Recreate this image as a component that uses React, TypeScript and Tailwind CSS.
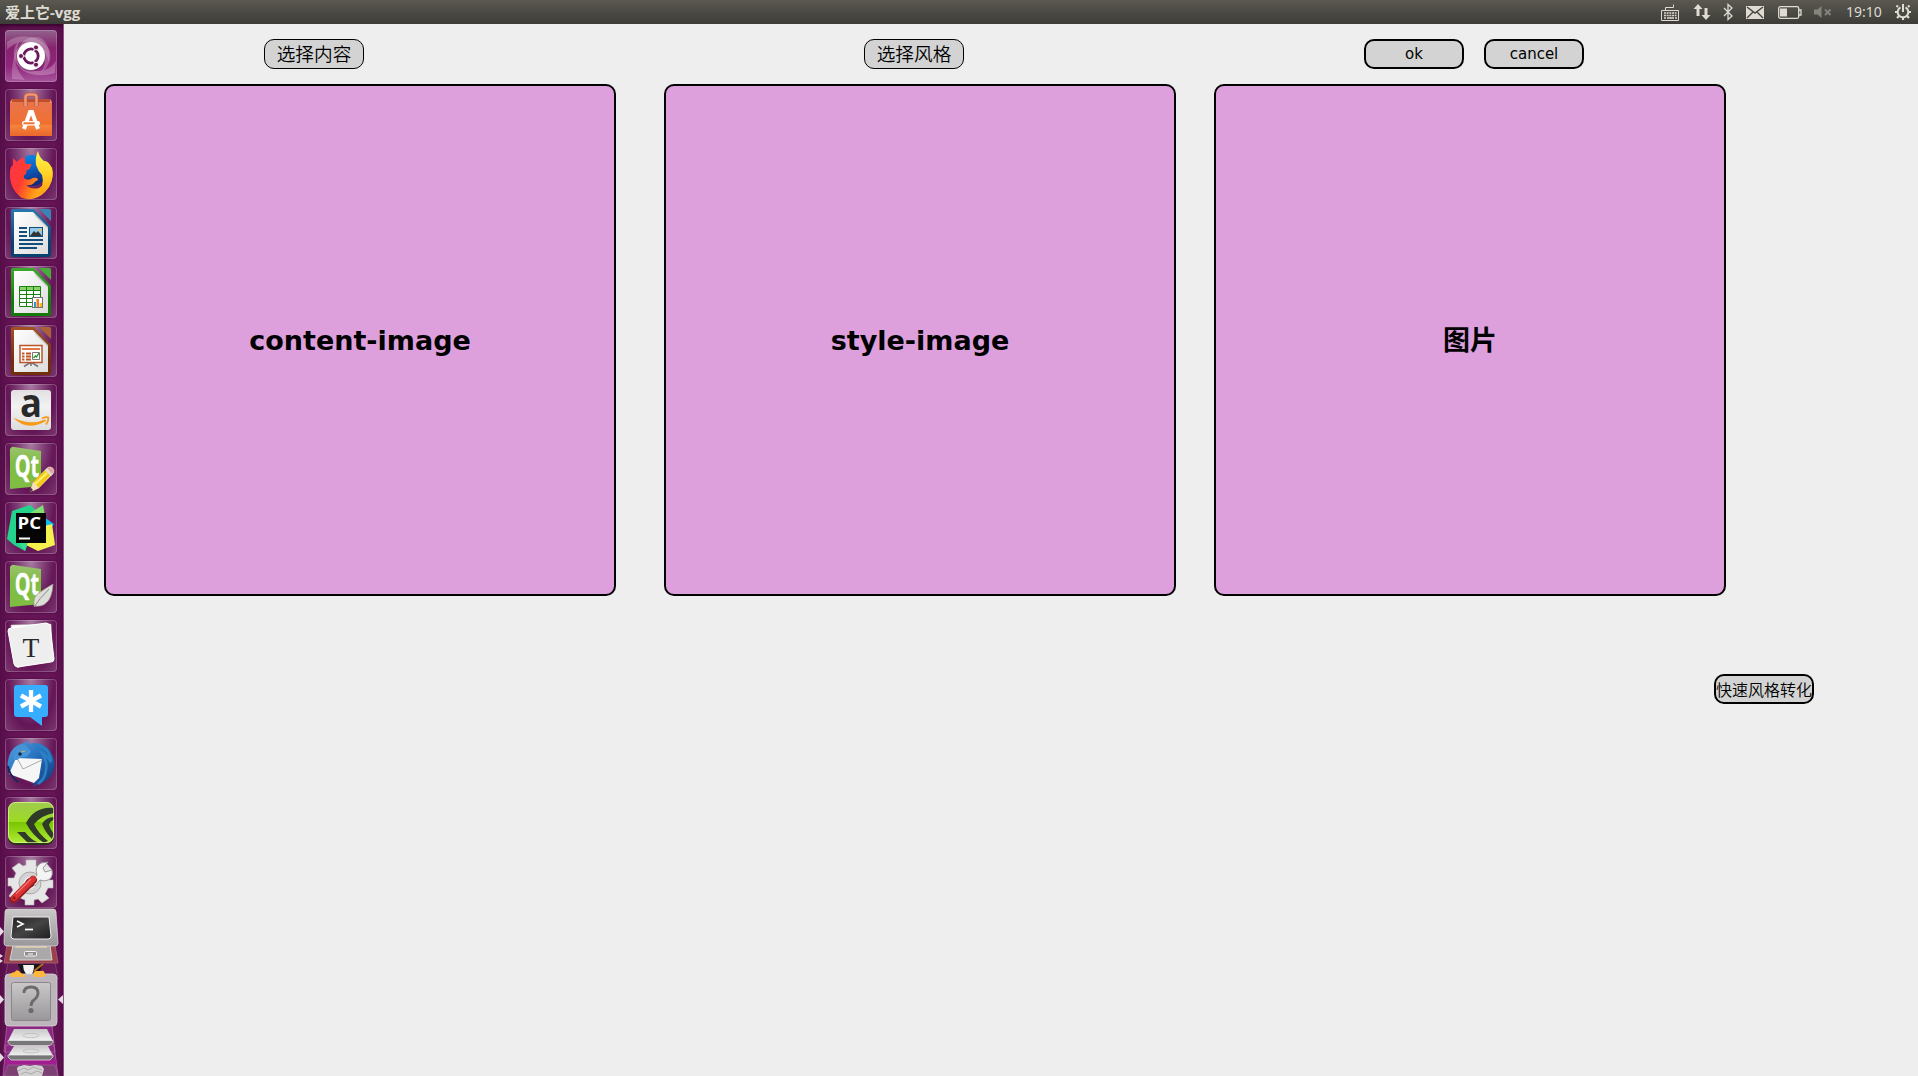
import type { ReactNode } from "react";

const cjk = "font-['DejaVu_Sans','Noto_Sans_CJK_SC',sans-serif]";

function Tile({ children, bright = false }: { children: ReactNode; bright?: boolean }) {
  return (
    <div
      className={
        "h-[52px] w-[52px] shrink-0 rounded-[4px] shadow-[inset_0_0_0_1px_rgba(255,255,255,0.2),0_0_2px_rgba(50,0,40,0.7)] " +
        (bright
          ? "bg-[linear-gradient(#91638c,#88226f_35%,#90257c_70%,#a6559b)]"
          : "bg-[radial-gradient(ellipse_at_50%_0%,#a87ba2_0%,#7d3b73_38%,#641556_64%,#7c3a71_100%)]")
      }
    >
      <svg viewBox="0 0 52 52" className="block h-[52px] w-[52px] overflow-visible">
        {children}
      </svg>
    </div>
  );
}

function Ubuntu() {
  return (
    <Tile bright>
      <g fill="#fff">
        <path d="M7 49C6 25 14 8 30 7 41 6 46 20 44 32 40 18 30 10 22 13 8 18 6 34 20 50z" opacity=".22" />
        <path d="M2 12C14 3 35 5 44 19 48 27 43 39 36 42 45 31 36 14 22 12 14 11 8 14 2 20z" opacity=".22" />
        <path d="M50 43C34 48 15 45 10 30 7 22 10 15 14 11 8 28 21 42 35 41 42 40 47 37 51 31z" opacity=".25" />
      </g>
      <circle cx="26" cy="27" r="14.4" fill="#4b0b40" opacity=".35" />
      <circle cx="26" cy="26" r="14" fill="#fff" />
      <circle cx="26" cy="26" r="7.2" fill="none" stroke="#6b1659" strokeWidth="2.800" />
      <g stroke="#fff" strokeWidth="1.200">
        <path d="M22 26H13M28 22l4-7M28 30l4 7" />
      </g>
      <g fill="#6b1659" stroke="#fff" strokeWidth=".9">
        <circle cx="16" cy="26" r="2.500" />
        <circle cx="31" cy="17.400" r="2.500" />
        <circle cx="31" cy="34.700" r="2.500" />
      </g>
    </Tile>
  );
}

function Software() {
  return (
    <Tile>
      <defs>
        <linearGradient id="bag" x2="0" y2="1">
          <stop stopColor="#e8744d" />
          <stop offset=".65" stopColor="#ef7030" />
          <stop offset=".7" stopColor="#f5843c" />
          <stop offset="1" stopColor="#e9672b" />
        </linearGradient>
      </defs>
      <path d="M7 10h38l2 5H5z" fill="#bd4f2e" />
      <path d="M5 13h42v34H5z" fill="url(#bag)" />
      <path d="M5 13l2-3v4M47 13l-2-3v4" fill="#f29165" />
      <path d="M20.500 17V8.500q0-3 3-3h5q3 0 3 3V17" fill="none" stroke="#b95235" strokeWidth="4" />
      <path d="M20.500 17V8.500q0-3 3-3h5q3 0 3 3V17" fill="none" stroke="#ed9675" strokeWidth="2.600" />
      <path d="M19 40l6-17h2l6 17" fill="none" stroke="#fff" strokeWidth="4" />
      <rect x="17" y="32" width="18" height="4.600" rx="2" fill="#fff" />
      <rect x="18.500" y="33.300" width="11" height="2" fill="#ee7430" />
    </Tile>
  );
}

function Firefox() {
  return (
    <Tile>
      <defs>
        <linearGradient id="fox" x1="0" y1=".2" x2="1" y2=".6">
          <stop stopColor="#ff3647" />
          <stop offset=".35" stopColor="#ff3b33" />
          <stop offset=".65" stopColor="#ff8a16" />
          <stop offset="1" stopColor="#ffd52b" />
        </linearGradient>
        <linearGradient id="foxtail" x2="0" y2="1">
          <stop stopColor="#fff44f" />
          <stop offset=".5" stopColor="#ffd428" />
          <stop offset="1" stopColor="#ff980e" />
        </linearGradient>
        <linearGradient id="globe" x2=".3" y2="1">
          <stop stopColor="#0d8fe8" />
          <stop offset=".5" stopColor="#0a63c8" />
          <stop offset="1" stopColor="#132a7a" />
        </linearGradient>
      </defs>
      <circle cx="27" cy="22.500" r="15.500" fill="url(#globe)" />
      <path d="M8 10q2 2 4 4 3-4 8-5-1 4 1 7h4q2 0 1 2-1 3-4 4-1 1-1 4-3 1-2 4 3 3 7 1 2-2 6-1l1 2q-3 1-4 3-3 3-8 2 5 5 13 3 9-4 7-17l6-4q3 15-7 25-10 10-23 6Q4 41 5 24q0-5 3-7z" fill="url(#fox)" />
      <path d="M33 3q1 6 6 10 4-1 8 7 2 9-2 16-4 9-13 12 8-11 5-21-4-4-6-10-1-8 2-14z" fill="url(#foxtail)" />
    </Tile>
  );
}

const docColors = {
  writer: ["#2a78ae", "#07436f", "#3a83b4"],
  calc: ["#3eaa2b", "#137b09", "#48ac3a"],
  impress: ["#a35424", "#71300a", "#ab6236"],
};

function Doc({ kind, children }: { kind: keyof typeof docColors; children: ReactNode }) {
  const [light, dark, fold] = docColors[kind];
  return (
    <Tile>
      <defs>
        <linearGradient id={kind} x2="0" y2="1">
          <stop stopColor={light} />
          <stop offset=".7" stopColor={dark} />
        </linearGradient>
        <linearGradient id={kind + "Paper"} x2="1" y2="1">
          <stop stopColor="#fff" />
          <stop offset="1" stopColor="#ddd" />
        </linearGradient>
      </defs>
      <path d="M8 2h21l17 18v28q0 2-2 2H8q-2 0-2-2V4q0-2 2-2z" fill={`url(#${kind})`} />
      <path d="M9 5h19l15 16v26H9z" fill={`url(#${kind}Paper)`} />
      <path d="M28 5l15 15v2L31 10z" fill="#c8c8c8" />
      <path d="M34 2h10q2 0 2 2v10z" fill={fold} />
      {children}
    </Tile>
  );
}

function Writer() {
  return (
    <Doc kind="writer">
      <path d="M14 21h8M14 25h8M14 29h8M14 33h24M14 37h24M14 41h18" stroke="#104f7c" strokeWidth="2" />
      <rect x="24.500" y="20.500" width="13" height="9" fill="#8fc9ec" stroke="#104f7c" />
      <path d="M25 29l4-5 2 2 2-2 4 5z" fill="#333" />
      <circle cx="35" cy="23" r="1.200" fill="#ffc52d" />
    </Doc>
  );
}

function Calc() {
  return (
    <Doc kind="calc">
      <path d="M15 21h21v20H15z" fill="#fff" />
      <path d="M15 21h21v4H15z" fill="#8bd46c" />
      <path d="M14.500 20.500h21v20h-21zM14.500 24.500h21M14.500 28.500h21M14.500 32.500h21M14.500 36.500h21M21.500 20.500v20M28.500 20.500v20" fill="none" stroke="#18820d" />
      <rect x="27.500" y="31.500" width="10" height="10" fill="#fff" stroke="#707070" />
      <path d="M29 41v-5h2v5z" fill="#249bd4" />
      <path d="M31.500 41v-8h2.500v8z" fill="#ef7824" />
      <path d="M34.500 41v-4H37v4z" fill="#f5bd1e" />
    </Doc>
  );
}

function Impress() {
  return (
    <Doc kind="impress">
      <path d="M26 37l-7 4.500M26 37l7 4.500M26 36v5" stroke="#777" strokeWidth="1.600" />
      <rect x="15" y="20.500" width="22" height="17" fill="#fff" stroke="#bb5527" strokeWidth="1.500" />
      <path d="M17 24h18" stroke="#e0764a" strokeWidth="2" />
      <path d="M17 28.500h2.500M17 31.500h2.500M17 34.500h2.500M21 28.500h5M21 31.500h5M21 34.500h5" stroke="#bf5527" strokeWidth="1.800" />
      <path d="M27.500 27.500h7v7h-7z" fill="#fff" stroke="#777" />
      <path d="M28.500 33l2-2 1 1 2.500-4" fill="none" stroke="#1a9a1a" strokeWidth="1.300" />
    </Doc>
  );
}

function Amazon() {
  return (
    <Tile>
      <defs>
        <linearGradient id="amz" x2="0" y2="1">
          <stop stopColor="#e2dfe2" />
          <stop offset=".4" stopColor="#f2f2f2" />
          <stop offset="1" stopColor="#ddd" />
        </linearGradient>
      </defs>
      <rect x="6" y="6" width="40" height="40" rx="3" fill="url(#amz)" />
      <text x="15" y="33" textLength="22" lengthAdjust="spacingAndGlyphs" fontFamily="Open Sans" fontWeight="bold" fontSize="40" fill="#292929">a</text>
      <path d="M8 33.500q17 8.500 32 2l1 1.500Q22 48 8 33.500z" fill="#f79a19" />
      <path d="M37 34.500q4-2 6.300-1 .5 3.500-2.300 7" fill="none" stroke="#f79a19" strokeWidth="1.900" />
    </Tile>
  );
}

function QtBase({ children }: { children: ReactNode }) {
  return (
    <Tile>
      <defs>
        <linearGradient id="qt" x2="0" y2="1">
          <stop stopColor="#9ac36e" />
          <stop offset=".4" stopColor="#80bd43" />
        </linearGradient>
      </defs>
      <path d="M5 6q2-3 4-2l27 4v35L5 46z" fill="url(#qt)" />
      <text x="9.700" y="34" textLength="24.500" lengthAdjust="spacingAndGlyphs" fontFamily="Open Sans" fontWeight="bold" fontSize="31" fill="#fff" stroke="#fff" strokeWidth=".4">Qt</text>
      {children}
    </Tile>
  );
}

function QtPencil() {
  return (
    <QtBase>
      <path d="M25 49l3-10 15-15q3-1 5 1t1 5L34 45z" fill="#fff" stroke="#8b5665" strokeWidth=".7" />
      <path d="M28 39l12-12 6 5-12 13z" fill="#f4c91f" />
      <path d="M29 42l13-12" stroke="#fff16a" strokeWidth="2" />
      <path d="M40 27l2-2 6 6-2 2z" fill="#ddd" />
      <path d="M42 25l2-1q5 1 5 5l-2 2z" fill="#e7a2a0" />
      <path d="M26 45l2-6 6 6-6 3z" fill="#f2dfb8" />
      <path d="M25 49l1-4 2 2z" fill="#333" />
    </QtBase>
  );
}

function QtFeather() {
  return (
    <QtBase>
      <path d="M29 45q-1-10 5-13 4-3 14-9-1 15-7 19-4 4-12 3z" fill="#deded9" stroke="#9b9b97" strokeWidth=".7" />
      <path d="M29 46q5-8 15-18" fill="none" stroke="#8c8c88" />
    </QtBase>
  );
}

function PyCharm() {
  return (
    <Tile>
      <path d="M7 9l18-6 9 8L20 49 9 43 2 37z" fill="#24d38b" />
      <path d="M25 11l13-8 3 16-20 7z" fill="#82de70" />
      <path d="M39 15l10 7-7 10-6-3z" fill="#12b9ee" />
      <path d="M39 24l8-2 3 21-17 6-14-7 21-5z" fill="#f4f14e" />
      <path d="M12 39l8 10 3-9z" fill="#36dc90" />
      <path d="M11 11h30v30H11z" fill="#050505" />
      <text x="12.500" y="27" fontFamily="Open Sans" fontWeight="bold" fontSize="16.500" textLength="23.500" lengthAdjust="spacingAndGlyphs" fill="#fff">PC</text>
      <path d="M14 36.500h11" stroke="#fff" strokeWidth="2" />
    </Tile>
  );
}

function Typora() {
  return (
    <Tile>
      <path d="M4 12l38-9 6 33-36 12z" fill="#ccc" />
      <path d="M6 5l40-1 2 37-38 5z" fill="#fff" stroke="#bbb" strokeWidth=".5" />
      <path d="M3 11q0-3 3-3l35-5q3 0 4 3l4 33q0 3-3 3l-33 5q-3 0-4-3z" fill="#eee" stroke="#fff" />
      <text x="26" y="36.500" textAnchor="middle" fontFamily="Liberation Serif" fontSize="27.500" fill="#292929">T</text>
    </Tile>
  );
}

function Chat() {
  return (
    <Tile>
      <path d="M12 6h28q3 0 3 3v26q0 3-3 3h-3v9L25 38H12q-3 0-3-3V9q0-3 3-3z" fill="#37adff" />
      <path d="M26 11v22M16 16.500l20 11M36 16.500l-20 11" stroke="#fff" strokeWidth="4.300" />
    </Tile>
  );
}

function Thunderbird() {
  return (
    <Tile>
      <defs>
        <linearGradient id="bird" x2="1" y2="1">
          <stop stopColor="#55a5e3" />
          <stop offset=".5" stopColor="#246dbb" />
          <stop offset="1" stopColor="#123778" />
        </linearGradient>
      </defs>
      <path d="M3 23Q5 8 19 5l6-3-2 4q14-4 22 7 8 12 2 23-4 7-13 10l-7 3 4-4-5 1 6-4-16-2-7-3q-8-6-6-14z" fill="url(#bird)" />
      <path d="M30 7q15 2 16 17-5-8-10-10 7 9 5 18-1 9-8 14" fill="none" stroke="#2b80c4" strokeWidth="2.500" />
      <path d="M4 36l7-16 26 1-3 19-5 5z" fill="#f6f6f6" />
      <path d="M12 20l6 11 19-9" fill="none" stroke="#aaa" />
      <path d="M8 22q1-13 11-16l7 7q-3 7-10 6l-4 3z" fill="#4694d5" />
      <circle cx="15" cy="16" r="1.800" fill="#172c4c" />
      <path d="M16 14l4-1" stroke="#cfb56d" />
      <path d="M3 28q1 9 10 16" fill="none" stroke="#132859" strokeWidth="2" />
    </Tile>
  );
}

function Nvidia() {
  return (
    <Tile>
      <defs>
        <linearGradient id="nv" x2="0" y2="1">
          <stop stopColor="#a0ca50" />
          <stop offset=".49" stopColor="#9cdc1f" />
          <stop offset=".5" stopColor="#79c500" />
          <stop offset="1" stopColor="#b1ea37" />
        </linearGradient>
        <clipPath id="nvClip"><rect x="3" y="5" width="46" height="41" rx="8" /></clipPath>
      </defs>
      <rect x="3" y="6" width="46" height="42" rx="8" fill="#29321b" />
      <g clipPath="url(#nvClip)">
        <rect x="3" y="5" width="46" height="41" fill="url(#nv)" />
        <path d="M49 11q-19-2-28 15 6 12 18 20l4-2Q33 36 29 27q8-9 20-11z" fill="#303a28" />
        <path d="M49 20q-8 0-12 7 3 8 10 15l2-5q-4-5-5-9 1-4 5-5zM12 35h8q6 8 14 11H23z" fill="#303a28" />
      </g>
      <rect x="3.500" y="5.500" width="45" height="40" rx="7" fill="none" stroke="#e0ff95" opacity=".7" />
    </Tile>
  );
}

function Settings() {
  return (
    <Tile>
      <g fill="#e6e6e6" stroke="#bbb" strokeWidth=".6">
        <path d="M21 4h10v6l5 2 5-5 6 7-4 5 1 5h4v8h-5l-3 6 4 4-7 5-4-4-4 1v5H20v-5l-5-2-4 4-7-6 4-6-2-4H3v-8h6l2-5-4-5 7-5 4 3 3-1z" />
      </g>
      <circle cx="25" cy="27" r="11" fill="#d3d3d3" stroke="#aaa" />
      <circle cx="25" cy="27" r="5.500" fill="#6c285f" stroke="#eee" strokeWidth="1.500" />
      <path d="M27 25l5-6q-3-8 4-12l7-1-5 6 2 4 7-2q2 10-8 11l-4-1-5 6z" fill="#f4f4f4" stroke="#999" />
      <path d="M9 43L28 24" stroke="#981b1b" strokeWidth="8" strokeLinecap="round" />
      <path d="M9 42L28 23" stroke="#db3434" strokeWidth="6" strokeLinecap="round" />
      <path d="M11 38L26 23" stroke="#f27572" strokeWidth="1.200" />
      <circle cx="9" cy="42" r="1.800" fill="#9e1c1c" />
    </Tile>
  );
}

/* Running apps and drives folded together at the end of the launcher. */
function FoldedStack() {
  return (
    <svg viewBox="0 0 64 168" className="-ml-[5px] block h-[168px] w-16 shrink-0">
      <defs>
        <linearGradient id="silver" x2="0" y2="1">
          <stop stopColor="#cbc8ca" />
          <stop offset="1" stopColor="#999799" />
        </linearGradient>
        <linearGradient id="screen" x2="1" y2="1">
          <stop stopColor="#222" />
          <stop offset=".5" stopColor="#444" />
          <stop offset="1" stopColor="#1e1e1e" />
        </linearGradient>
        <linearGradient id="drive" x2="0" y2="1">
          <stop stopColor="#c8c8c8" />
          <stop offset="1" stopColor="#f2f2f2" />
        </linearGradient>
      </defs>
      {/* Penguin */}
      <path d="M8 54h47l3 17H5z" fill="#681b59" stroke="#87587f" strokeWidth=".6" />
      <path d="M18 56h25l-5 11H22z" fill="#161616" />
      <path d="M23 57h11q0 6-2 9h-6q-3-4-3-9z" fill="#f2f2f2" />
      {/* Files */}
      <path d="M7 37h48l3 18H4z" fill="#994149" stroke="#b26c78" strokeWidth=".7" />
      <path d="M13 37h37l2 15H10z" fill="#aaa8a9" stroke="#d5d2d4" />
      <path d="M16 37h31v3H15z" fill="#d6c7a8" />
      <rect x="24.500" y="43.500" width="12" height="4.500" rx="1" fill="#8d8d8d" stroke="#f3f3f3" />
      <path d="M28 46h5" stroke="#fff" />
      {/* Terminal */}
      <path d="M8 1h45q3 0 3 3l2 31q0 3-3 3H7q-3 0-3-3L5 4q0-3 3-3z" fill="url(#silver)" stroke="#dedbdd" strokeWidth=".7" />
      <path d="M13 9h36l2 19q0 3-3 3H14q-3 0-3-3z" fill="url(#screen)" stroke="#eee" />
      <path d="M17 13l6 3-6 3" fill="none" stroke="#fff" strokeWidth="1.600" />
      <path d="M25 21.500h8" stroke="#fff" strokeWidth="1.700" />
      {/* Drives */}
      <path d="M7 117h45l3 27H4zM6 137h48l4 31H3z" fill="#8c2782" stroke="#ad6caa" strokeWidth=".7" />
      <path d="M5 152h53l-4 5H8z" fill="#a21e90" />
      <path d="M14 121h33l6 12H8z" fill="url(#drive)" />
      <path d="M8 132.500h45v2l-3 3H11l-3-3z" fill="#777" stroke="#eee" strokeWidth=".7" />
      <ellipse cx="31" cy="127.500" rx="8" ry="2.200" fill="none" stroke="#bbb" strokeWidth=".8" />
      <path d="M14 138h34l5 10H8z" fill="url(#drive)" />
      <path d="M8 147h45v2l-3 3H11l-3-3z" fill="#777" stroke="#eee" strokeWidth=".7" />
      <ellipse cx="31" cy="143" rx="8" ry="2" fill="none" stroke="#bbb" strokeWidth=".8" />
      {/* Trash */}
      <path d="M8 157h47l3 11H4z" fill="#7d4073" stroke="#9e6c96" strokeWidth=".6" />
      <path d="M17 161q0-3 4-3l3-1 6 1 5-1 7 1 2 3-2 7H19z" fill="#d2d2d2" />
      <path d="M18 163l6-3 4 2 5-3 9 3M21 166l5-2 5 2 6-3 5 2" fill="none" stroke="#a5a5a5" strokeWidth=".9" />
      {/* Unknown application */}
      <rect x="5" y="66" width="52" height="52" rx="4" fill="#bdb5bc" stroke="#d8d2d7" strokeWidth=".8" />
      <rect x="11.500" y="74.500" width="39" height="38" rx="2" fill="url(#silver)" stroke="#888" />
      <path d="M24 85q0-6 7-6t7 6q0 4-4 7-3 2-3 6" fill="none" stroke="#6b6b6b" strokeWidth="2.800" />
      <circle cx="31" cy="102.500" r="2.600" fill="#6b6b6b" />
      {/* Penguin feet and brush overlap the card in front */}
      <path d="M10 67q0-2 5-3 1-3 4-1 3 4 8 5-1 1-6 1H11q-1-1-1-2zM34 69q-2-4 1-6h6q3-1 3 1l2 3q-1 2-6 2z" fill="#ffb83c" />
      <path d="M34 63l9-7" stroke="#b96b25" strokeWidth="2" />
      <g fill="#e4dce3">
        <path d="M0 19l4 4.500L0 28zM0 87l4 4.500L0 96zM0 145l4 4.500L0 154zM63 87l-5 4.500 5 4.500z" />
        <path d="M0 46l3 2-3 2zM0 51l3 2-3 2z" />
      </g>
    </svg>
  );
}

function Launcher() {
  return (
    <nav className="flex w-16 shrink-0 flex-col border-r border-[#8b5582] bg-[linear-gradient(90deg,#570e49,#651456_20%,#651456_85%,#5a0d4c)] pt-[6px] pl-[5px] shadow-[inset_0_5px_4px_-3px_#320027]">
      <div className="flex flex-col gap-[7px]">
        <Ubuntu />
        <Software />
        <Firefox />
        <Writer />
        <Calc />
        <Impress />
        <Amazon />
        <QtPencil />
        <PyCharm />
        <QtFeather />
        <Typora />
        <Chat />
        <Thunderbird />
        <Nvidia />
        <Settings />
      </div>
      <FoldedStack />
    </nav>
  );
}

function Indicators() {
  return (
    <div className="flex h-6 items-center text-[#dfdbd2]">
      <svg viewBox="0 0 20 20" className="mt-[2px] h-5 w-5" fill="none" stroke="currentColor">
        <path d="M5.500 7V4.500h8V1.500M1.500 7.500h17v10h-17z" />
        <path d="M4 10h12.500M4 12.500h12.500" strokeWidth="1.700" strokeDasharray="1.900 .8" />
        <path d="M4 15h2M7 15h7M15 15h2" strokeWidth="1.600" />
      </svg>
      <svg viewBox="0 0 18 18" className="ml-[13px] h-[18px] w-[18px]" fill="currentColor">
        <path d="M5 1L.5 6h3v7h3V6h3zM13 17l4.500-5h-3V5h-3v7h-3z" />
      </svg>
      <svg viewBox="0 0 10 18" className="ml-3 h-[18px] w-[10px]" fill="none" stroke="currentColor" strokeWidth="1.300">
        <path d="M1 5l8 8-4 3.500V1.500L9 5l-8 8" />
      </svg>
      <svg viewBox="0 0 18 13" className="ml-[13px] h-[13px] w-[18px]">
        <path d="M0 0h18v13H0z" fill="currentColor" />
        <path d="M1 1l8 6 8-6M1 12l6-6M17 12l-6-6" fill="none" stroke="#474540" strokeWidth="1.400" />
      </svg>
      <svg viewBox="0 0 24 13" className="ml-[14px] h-[13px] w-6" fill="none" stroke="currentColor" strokeWidth="1.300">
        <rect x=".7" y=".7" width="20" height="11.600" rx="1.500" />
        <path d="M21 4h2v5h-2" />
        <path d="M2 2.500h7v8H2z" fill="currentColor" stroke="none" />
      </svg>
      <svg viewBox="0 0 18 14" className="ml-3 h-[14px] w-[18px] text-[#86847d]">
        <path d="M0 4.500h3.500L7.500 1v12L3.500 9.500H0z" fill="currentColor" />
        <path d="M11 4.500l5.500 5.500M16.500 4.500L11 10" stroke="currentColor" strokeWidth="1.800" />
      </svg>
      <span className="ml-[14px] w-[36px] text-center font-['Noto_Sans',sans-serif] text-[14px] leading-6 whitespace-nowrap">19:10</span>
      <svg viewBox="0 0 18 18" className="ml-[12px] h-[18px] w-[18px]" fill="none" stroke="currentColor">
        <path d="M6.500 4.300a5.300 5.300 0 1 0 5 0" strokeWidth="2" />
        <path d="M9 1v8" strokeWidth="2" />
        <path d="M4 4L2.500 2.500M14 4l1.500-1.500M3.500 9H1M14.500 9H17M5 13l-2 2M13 13l2 2M9 14.500V17" strokeWidth="2.200" />
      </svg>
    </div>
  );
}

const buttonBase = `flex h-[30px] w-[100px] shrink-0 items-center justify-center rounded-[10px] border-black bg-[#d3d3d3] whitespace-nowrap text-black ${cjk}`;
const panelBase = `flex h-[512px] w-[512px] shrink-0 items-center justify-center rounded-[10px] border-2 border-black bg-[#dda0dd] pt-[2px] text-[27px] leading-8 font-bold text-black ${cjk}`;

export default function App() {
  return (
    <div className="flex h-[1076px] w-[1918px] flex-col overflow-hidden bg-[#eeeeee]">
      <header className="flex h-6 shrink-0 items-center justify-between bg-[linear-gradient(#5a5850,#3d3c38)] pr-[6px] pl-[5px]">
        <h1 className="font-['Open_Sans','Noto_Sans_CJK_SC',sans-serif] text-[15px] leading-[22px] font-bold text-[#dfdbd2]">爱上它-vgg</h1>
        <Indicators />
      </header>
      <div className="flex min-h-0 flex-1">
        <Launcher />
        <main className="flex flex-1 flex-col pt-[15px]">
          <div className="flex pl-[200px]">
            <button className={`${buttonBase} border pt-[2px] text-[18.67px] leading-[26px] font-[350]`}>选择内容</button>
            <button className={`${buttonBase} ml-[500px] border pt-[2px] text-[18.67px] leading-[26px] font-[350]`}>选择风格</button>
            <button className={`${buttonBase} ml-[400px] border-2 text-[15px] leading-5`}>ok</button>
            <button className={`${buttonBase} ml-5 border-2 text-[15px] leading-5`}>cancel</button>
          </div>
          <div className="mt-[15px] flex pl-10">
            <section className={panelBase}>content-image</section>
            <section className={`${panelBase} ml-12`}>style-image</section>
            <section className={`${panelBase} ml-[38px]`}>图片</section>
          </div>
          <div className="mt-[78px] flex justify-end pr-[104px]">
            <button className={`${buttonBase} border-2 pt-[4px] text-[16px] leading-[22px] font-[350]`}>快速风格转化</button>
          </div>
        </main>
      </div>
    </div>
  );
}
